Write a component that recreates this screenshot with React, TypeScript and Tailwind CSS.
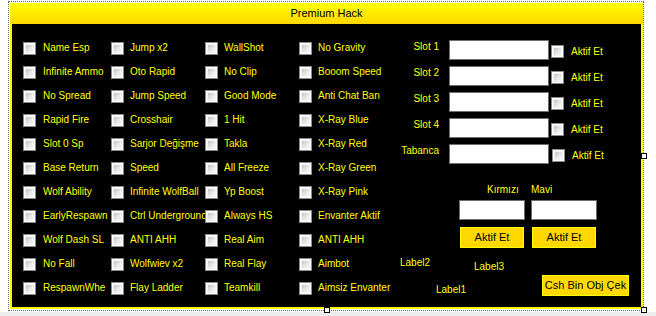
import React from "react";

const font = { fontFamily: '"Liberation Sans", Arial, sans-serif' };

function Check() {
  return (
    <div className="w-[13px] h-[13px] shrink-0 border border-[#8a8a8a] bg-white p-[1px]">
      <div className="w-full h-full border border-[#f2f2f2] bg-linear-to-br from-[#c4c4c4] via-[#e4e4e4] to-[#fbfbfb]" />
    </div>
  );
}

const columns: { w: string; gap: string; items: string[] }[] = [
  {
    w: "w-[88px]",
    gap: "ml-[7px]",
    items: [
      "Name Esp",
      "İnfinite Ammo",
      "No Spread",
      "Rapid Fire",
      "Slot 0 Sp",
      "Base Return",
      "Wolf Ability",
      "EarlyRespawn",
      "Wolf Dash SL",
      "No Fall",
      "RespawnWhe",
    ],
  },
  {
    w: "w-[94px]",
    gap: "ml-[6px]",
    items: [
      "Jump x2",
      "Oto Rapid",
      "Jump Speed",
      "Crosshair",
      "Sarjor Değişme",
      "Speed",
      "İnfinite WolfBall",
      "Ctrl Underground",
      "ANTİ AHH",
      "Wolfwiev x2",
      "Flay Ladder",
    ],
  },
  {
    w: "w-[94px]",
    gap: "ml-[6px]",
    items: [
      "WallShot",
      "No Clip",
      "Good Mode",
      "1 Hit",
      "Takla",
      "All Freeze",
      "Yp Boost",
      "Always HS",
      "Real Aim",
      "Real Flay",
      "Teamkill",
    ],
  },
  {
    w: "w-[101px]",
    gap: "ml-[6px]",
    items: [
      "No Gravity",
      "Booom Speed",
      "Anti Chat Ban",
      "X-Ray Blue",
      "X-Ray Red",
      "X-Ray Green",
      "X-Ray Pink",
      "Envanter Aktif",
      "ANTİ AHH",
      "Aimbot",
      "Aimsiz Envanter",
    ],
  },
];

const slots = ["Slot 1", "Slot 2", "Slot 3", "Slot 4", "Tabanca"];

function Btn({ w, label }: { w: string; label: string }) {
  return (
    <div
      className={`${w} h-[21px] shrink-0 bg-[#ffd800] border border-[#ffff00] flex items-center justify-center text-[11px] leading-[13px] text-black`}
    >
      {label}
    </div>
  );
}

export default function App() {
  return (
    <div
      className="relative w-[656px] h-[316px] bg-white overflow-hidden flex flex-col text-[#ffff00]"
      style={font}
    >
      {/* form */}
      <div className="ml-[10px] mt-[3px] w-[633px] h-[306px] flex flex-col bg-[#ffff00] border-x-2 border-b-2 border-[#ffff00] box-border">
        <div className="h-[21px] -mx-[2px] shrink-0 bg-linear-to-b from-[#ffff00] to-[#ffd600] flex justify-center pt-[4px] text-[11px] leading-[13px] text-black">
          Premium Hack
        </div>
        <div className="flex-1 bg-black flex items-start">
          {/* checkbox grid */}
          <div className="flex pl-[11px] pt-[18px]">
            {columns.map((c, ci) => (
              <div key={ci} className={`${c.w} flex flex-col`}>
                {c.items.map((t, i) => (
                  <div key={i} className="h-[24px] flex items-start">
                    <Check />
                    <span
                      className={`${c.gap} flex-1 min-w-0 overflow-hidden whitespace-nowrap text-[10px] leading-[12px]`}
                    >
                      {t}
                    </span>
                  </div>
                ))}
              </div>
            ))}
          </div>

          {/* right panel */}
          <div className="flex flex-col pt-[16px] text-[10px] leading-[12px]">
            {slots.map((s, i) => (
              <div key={i} className="h-[26px] flex items-start">
                <span className="w-[39px] text-right mt-[1px] whitespace-nowrap">{s}</span>
                <div className="ml-[10px] w-[100px] h-[20px] bg-white border border-[#6e6e6e]" />
                <div className={`${i === 4 ? "ml-[3px]" : "ml-[2px]"} mt-[5px]`}>
                  <Check />
                </div>
                <span className="ml-[7px] mt-[5px] leading-[13px] whitespace-nowrap">Aktif Et</span>
              </div>
            ))}

            <div className="mt-[14px] pl-[59px] flex">
              <span className="w-[72px] pl-[28px]">Kırmızı</span>
              <span>Mavi</span>
            </div>
            <div className="mt-[4px] pl-[59px] flex">
              <div className="w-[66px] h-[20px] bg-white border border-[#6e6e6e]" />
              <div className="ml-[6px] w-[66px] h-[20px] bg-white border border-[#6e6e6e]" />
            </div>
            <div className="mt-[7px] pl-[60px] flex">
              <Btn w="w-[64px]" label="Aktif Et" />
              <div className="ml-[8px]">
                <Btn w="w-[64px]" label="Aktif Et" />
              </div>
            </div>
            <div className="flex items-start">
              <div className="w-[74px] flex flex-col">
                <span className="mt-[9px]">Label2</span>
                <span className="ml-[36px] mt-[15px]">Label1</span>
              </div>
              <div className="w-[68px]">
                <span className="block mt-[13px]">Label3</span>
              </div>
              <div className="mt-[27px]">
                <Btn w="w-[87px]" label="Csh Bin Obj Çek" />
              </div>
            </div>
          </div>
        </div>
      </div>

      {/* bottom strip */}
      <div className="mt-[3px] h-[4px] w-full bg-[#ececec]" />

      {/* designer selection overlay */}
      <div className="absolute left-[8px] top-[1px] w-[636px] h-[310px] border border-dotted border-[#6a6a6a] pointer-events-none" />
      <div className="absolute left-[641px] top-[153px] w-[6px] h-[6px] bg-white border border-black" />
      <div className="absolute left-[324px] top-[307px] w-[6px] h-[6px] bg-white border border-black" />
      <div className="absolute left-[641px] top-[307px] w-[6px] h-[6px] bg-white border border-black" />
    </div>
  );
}
